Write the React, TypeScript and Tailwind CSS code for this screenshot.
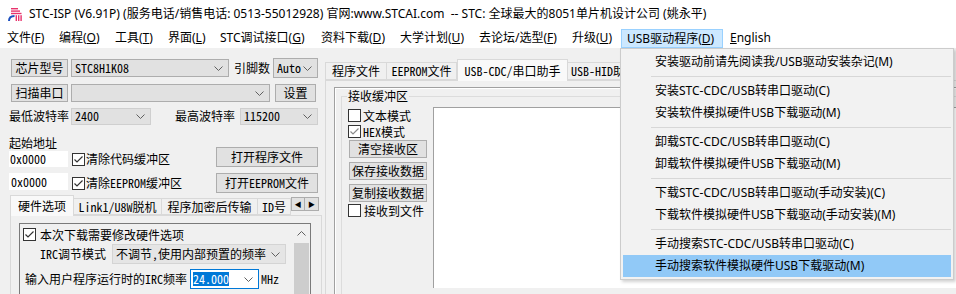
import React from "react";

const ui = "font-['Noto_Sans','Noto_Sans_CJK_SC',sans-serif]";
const dlg = "font-['Noto_Sans_Mono_CJK_SC','Noto_Sans_CJK_SC',monospace]";

function Logo() {
  return (
    <svg width="16" height="16" viewBox="0 0 16 16" className="ml-[7px] shrink-0">
      <g fill="#e8336d">
        <rect x="4" y="2" width="7" height="1.4" />
        <rect x="4" y="4.4" width="9" height="1.4" />
        <rect x="4" y="6.8" width="10.5" height="1.4" />
        <rect x="8.6" y="9.2" width="1.4" height="5.8" />
        <rect x="11" y="9.2" width="1.4" height="5.8" />
        <rect x="13.4" y="9.2" width="1.4" height="5.8" />
      </g>
      <path d="M2 15 C2 11.5 3.8 10 7.5 10" fill="none" stroke="#1d4fbf" strokeWidth="2" />
    </svg>
  );
}

function Chevron({ up = false }: { up?: boolean }) {
  return (
    <svg width="9" height="5" viewBox="0 0 9 5" className="shrink-0">
      <polyline
        points={up ? "0.5,4.5 4.5,0.5 8.5,4.5" : "0.5,0.5 4.5,4.5 8.5,0.5"}
        fill="none"
        stroke="#606060"
        strokeWidth="1"
      />
    </svg>
  );
}

function Combo({ className, text }: { className: string; text?: string }) {
  return (
    <div
      className={`flex items-center justify-between border border-[#adadad] bg-[#e1e1e1] pl-[3px] pr-[5px] leading-[14px] ${className}`}
    >
      <span className="whitespace-nowrap">{text}</span>
      <Chevron />
    </div>
  );
}

function Btn({ className, children }: { className: string; children: React.ReactNode }) {
  return (
    <div
      className={`flex items-center justify-center border border-[#adadad] bg-[#e1e1e1] leading-[14px] whitespace-nowrap ${className}`}
    >
      {children}
    </div>
  );
}

function Check({ checked = false, grey = false }: { checked?: boolean; grey?: boolean }) {
  return (
    <div className="flex h-[13px] w-[13px] shrink-0 items-center justify-center border border-[#333333] bg-white">
      {checked && (
        <svg width="11" height="11" viewBox="0 0 11 11">
          <polyline
            points="1.5,5.5 4,8 9.5,2.5"
            fill="none"
            stroke={grey ? "#8a8a8a" : "#333333"}
            strokeWidth="1.2"
          />
        </svg>
      )}
    </div>
  );
}

const menus = [
  { t: "文件(", k: "F", w: "w-[52px] pl-[7px]" },
  { t: "编程(", k: "O", w: "w-[56px] pl-[7px]" },
  { t: "工具(", k: "T", w: "w-[53px] pl-[7px]" },
  { t: "界面(", k: "L", w: "w-[52px] pl-[7px]" },
  { t: "STC调试接口(", k: "G", w: "w-[101px] pl-[7px]" },
  { t: "资料下载(", k: "D", w: "w-[79px] pl-[7px]" },
  { t: "大学计划(", k: "U", w: "w-[79px] pl-[7px]" },
  { t: "去论坛/选型(", k: "F", w: "w-[93px] pl-[7px]" },
  { t: "升级(", k: "U", w: "w-[56px] pl-[7px]" },
];

const drop: (string | null)[] = [
  "安装驱动前请先阅读我/USB驱动安装杂记(M)",
  null,
  "安装STC-CDC/USB转串口驱动(C)",
  "安装软件模拟硬件USB下载驱动(M)",
  null,
  "卸载STC-CDC/USB转串口驱动(C)",
  "卸载软件模拟硬件USB下载驱动(M)",
  null,
  "下载STC-CDC/USB转串口驱动(手动安装)(C)",
  "下载软件模拟硬件USB下载驱动(手动安装)(M)",
  null,
  "手动搜索STC-CDC/USB转串口驱动(C)",
  "手动搜索软件模拟硬件USB下载驱动(M)",
];

function LeftPanel() {
  return (
    <div className="flex w-[325px] shrink-0 flex-col">
      <div className="mt-[10px] flex h-[20px] items-center pl-[11px]">
        <Btn className="h-[18px] w-[57px]">芯片型号</Btn>
        <Combo className="ml-[3px] h-[18px] w-[158px]" text="STC8H1K08" />
        <span className="w-[44px] pl-[5px]">引脚数</span>
        <Combo className="h-[20px] w-[45px]" text="Auto" />
      </div>
      <div className="mt-[6px] flex h-[18px] items-center pl-[11px]">
        <Btn className="h-[18px] w-[57px]">扫描串口</Btn>
        <Combo className="ml-[3px] h-[18px] w-[199px]" />
        <Btn className="ml-[5px] h-[18px] w-[41px]">设置</Btn>
      </div>
      <div className="mt-[5px] flex h-[18px] items-center pl-[9px]">
        <span className="w-[62px]">最低波特率</span>
        <Combo className="h-[17px] w-[80px] border-[#cfcfcf]" text="2400" />
        <span className="ml-[24px] w-[65px]">最高波特率</span>
        <Combo className="h-[17px] w-[78px] border-[#cfcfcf]" text="115200" />
      </div>
      <div className="mt-[11px] flex h-[31px] items-end pl-[9px]">
        <div className="flex w-[59px] flex-col">
          <span className="h-[14px] leading-[14px]">起始地址</span>
          <div className="mt-[1px] h-[16px] bg-white pl-[1px] leading-[16px]">0x0000</div>
        </div>
        <div className="ml-[4px] flex h-[16px] w-[144px] items-center gap-[1px]">
          <Check checked />
          <span className="leading-[14px]">清除代码缓冲区</span>
        </div>
        <Btn className="h-[20px] w-[102px]">打开程序文件</Btn>
      </div>
      <div className="mt-[6px] flex h-[20px] items-start pl-[9px]">
        <div className="h-[17px] w-[59px] bg-white pl-[2px] leading-[17px]">0x0000</div>
        <div className="ml-[4px] flex h-[20px] w-[144px] items-center gap-[1px]">
          <Check checked />
          <span className="leading-[14px]">清除EEPROM缓冲区</span>
        </div>
        <Btn className="h-[20px] w-[102px]">打开EEPROM文件</Btn>
      </div>
      <div className="mt-[2px] flex h-[20px] items-end pl-[10px]">
        <div className="relative z-10 -mb-px flex h-[21px] w-[64px] items-center justify-center border border-b-0 border-[#d9d9d9] bg-[#f9f9f9]">
          硬件选项
        </div>
        <div className="flex h-[17px] w-[88px] items-center justify-center border border-l-0 border-[#d9d9d9]">
          Link1/U8W脱机
        </div>
        <div className="flex h-[17px] w-[96px] items-center justify-center border border-l-0 border-[#d9d9d9]">
          程序加密后传输
        </div>
        <div className="flex h-[17px] w-[33px] items-center border border-l-0 border-[#d9d9d9] pl-[4px] whitespace-nowrap">
          ID号
        </div>
        <div className="mb-[4px] flex h-[14px]">
          <div className="flex w-[14px] items-center justify-center border border-[#adadad] bg-[#e1e1e1] text-[7px]">◀</div>
          <div className="flex w-[14px] items-center justify-center border border-l-0 border-[#adadad] bg-[#e1e1e1] text-[7px]">▶</div>
        </div>
      </div>
      <div className="ml-[10px] mr-[3px] flex-1 border border-b-0 border-[#d9d9d9] pl-[8px] pt-[7px]">
        <div className="flex h-[80px] w-[292px] border border-b-0 border-[#7a7a7a]">
          <div className="flex flex-1 flex-col">
            <div className="mt-[4px] flex h-[13px] items-center gap-[4px] pl-[3px]">
              <Check checked />
              <span className="leading-[13px]">本次下载需要修改硬件选项</span>
            </div>
            <div className="mt-[3px] flex h-[20px] items-center pl-[20px]">
              <span className="w-[72px]">IRC调节模式</span>
              <Combo className="h-[20px] w-[174px] border-[#d4d4d4] bg-[#e5e5e5]" text="不调节,使用内部预置的频率" />
            </div>
            <div className="mt-[5px] flex h-[20px] items-center pl-[5px]">
              <span className="w-[165px] whitespace-nowrap">输入用户程序运行时的IRC频率</span>
              <div className="flex h-[20px] w-[69px] items-center justify-between border border-[#0078d7] bg-white pl-[2px] pr-[5px]">
                <span className="bg-[#0078d7] leading-[14px] text-white">24.000</span>
                <Chevron />
              </div>
              <span className="ml-[2px]">MHz</span>
            </div>
          </div>
          <div className="flex w-[17px] flex-col">
            <div className="flex h-[19px] items-center justify-center">
              <Chevron up />
            </div>
            <div className="mx-[1px] flex-1 bg-[#cdcdcd]" />
          </div>
        </div>
      </div>
    </div>
  );
}

function MiddlePanel() {
  return (
    <div className="flex min-w-0 flex-1 flex-col">
      <div className="mt-[11px] flex h-[21px] items-end whitespace-nowrap">
        <div className="flex h-[18px] w-[62px] items-center justify-center border border-[#d9d9d9]">程序文件</div>
        <div className="flex h-[18px] w-[70px] items-center justify-center border border-l-0 border-[#d9d9d9]">EEPROM文件</div>
        <div className="relative z-10 -mb-px flex h-[22px] w-[111px] items-center justify-center border border-b-0 border-[#d9d9d9] bg-[#f9f9f9]">
          USB-CDC/串口助手
        </div>
        <div className="flex h-[18px] w-[80px] items-center border border-l-0 border-[#d9d9d9] pl-[3px]">USB-HID助手</div>
      </div>
      <div className="flex-1 border-l border-t border-[#d9d9d9] pl-[8px] pt-[6px]">
        <div className="h-full border-l border-t border-[#a0a0a0]">
          <div className="h-full border-l border-t border-white pl-[5px] pt-[1px]">
            <div className="flex h-full flex-col">
              <div className="flex h-[12px]">
                <div className="h-[6px] w-[6px] self-end border-l border-t border-[#dcdcdc]" />
                <span className="px-[1px] leading-[12px]">接收缓冲区</span>
                <div className="h-[6px] flex-1 self-end border-t border-[#dcdcdc]" />
              </div>
              <div className="flex flex-1 border-l border-[#dcdcdc]">
                <div className="flex w-[91px] flex-col pl-[6px]">
                  <div className="mt-[7px] flex h-[13px] items-center gap-[2px]">
                    <Check />
                    <span className="leading-[12px]">文本模式</span>
                  </div>
                  <div className="mt-[3px] flex h-[13px] items-center gap-[2px]">
                    <Check checked grey />
                    <span className="leading-[12px]">HEX模式</span>
                  </div>
                  <Btn className="ml-[1px] mt-[2px] h-[18px] w-[78px]">清空接收区</Btn>
                  <Btn className="ml-[1px] mt-[4px] h-[18px] w-[78px]">保存接收数据</Btn>
                  <Btn className="ml-[1px] mt-[4px] h-[18px] w-[78px]">复制接收数据</Btn>
                  <div className="mt-[2px] flex h-[13px] items-center gap-[3px]">
                    <Check />
                    <span className="leading-[13px]">接收到文件</span>
                  </div>
                </div>
                <div className="mt-[5px] h-[181px] flex-1 border-l border-t border-[#a0a0a0] bg-white" />
              </div>
            </div>
          </div>
        </div>
      </div>
    </div>
  );
}

function DropMenu() {
  return (
    <div
      className={`absolute left-[620px] top-[48px] w-[334px] border border-[#cccccc] bg-[#f2f2f2] p-[2px] shadow-[2px_2px_3px_rgba(0,0,0,0.18)] ${ui} text-[12px]`}
    >
      {drop.map((d, i) =>
        d === null ? (
          <div key={i} className="flex h-[7px] items-center pl-[28px]">
            <div className="h-px flex-1 bg-[#d7d7d7]" />
          </div>
        ) : (
          <div
            key={i}
            className={`h-[22px] whitespace-nowrap pl-[32px] leading-[22px] ${
              i === drop.length - 1 ? "bg-[#91c9f7]" : ""
            }`}
          >
            {d}
          </div>
        )
      )}
    </div>
  );
}

export default function App() {
  return (
    <div className="relative h-[294px] w-[956px] overflow-hidden bg-[#f0f0f0] text-black">
      <div className={`flex h-[28px] items-center bg-white ${ui} text-[12px]`}>
        <Logo />
        <span className="ml-[6px] whitespace-pre leading-[16px]">
          STC-ISP (V6.91P) (服务电话/销售电话: 0513-55012928) 官网:www.STCAI.com  -- STC: 全球最大的8051单片机设计公司 (姚永平)
        </span>
      </div>
      <div className={`flex h-[20px] bg-white ${ui} text-[12px]`}>
        {menus.map((m, i) => (
          <div key={i} className={`h-[20px] whitespace-nowrap leading-[20px] ${m.w}`}>
            {m.t}
            <span className="underline">{m.k}</span>)
          </div>
        ))}
        <div className="mt-[1px] h-[19px] w-[102px] whitespace-nowrap border border-[#99d1ff] bg-[#cce8ff] pl-[5px] leading-[17px]">
          USB驱动程序(<span className="underline">D</span>)
        </div>
        <div className="h-[20px] pl-[7px] leading-[20px]">
          <span className="underline">E</span>nglish
        </div>
      </div>
      <div className={`flex h-[246px] ${dlg} text-[12px]`}>
        <LeftPanel />
        <MiddlePanel />
      </div>
      <DropMenu />
    </div>
  );
}
